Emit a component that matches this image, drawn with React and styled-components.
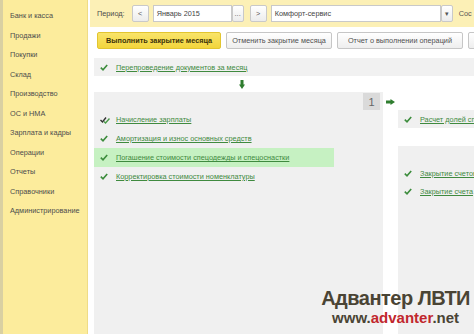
import React from "react";
import styled, { createGlobalStyle } from "styled-components";

const Global = createGlobalStyle`
  html, body { margin: 0; padding: 0; background: #fff; }
  body { font-family: "Liberation Sans", Arial, sans-serif; font-size: 7.3px; color: #4a4a4a; }
`;

const Page = styled.div`
  position: relative;
  display: flex;
  width: 474px;
  height: 334px;
  overflow: hidden;
  background: #fff;
`;

const Sidebar = styled.div`
  width: 84px;
  flex: none;
  background: #fcec9c;
  border-left: 3px solid #d9d0a2;
  border-right: 1px solid #efdc86;
  padding-top: 6px;
  display: flex;
  flex-direction: column;
`;

const NavItem = styled.div`
  height: 19.5px;
  line-height: 19.5px;
  padding-left: 7px;
  white-space: nowrap;
  color: #4d4d4d;
`;

const Main = styled.div`
  flex: 1;
  min-width: 0;
  padding-left: 6px;
  display: flex;
  flex-direction: column;
`;

const TopBar = styled.div`
  height: 27px;
  margin-left: -4px;
  padding-left: 7px;
  background: #fcf0b6;
  display: flex;
  align-items: center;
  white-space: nowrap;
`;

const Label = styled.span`
  margin-right: 7px;
`;

const SmallBtn = styled.div`
  width: ${(p) => p.w || 17}px;
  height: 17px;
  flex: none;
  box-sizing: border-box;
  border: 1px solid #c9c9c9;
  border-radius: 2px;
  background: linear-gradient(#ffffff, #ececec);
  display: flex;
  align-items: center;
  justify-content: center;
  color: #555;
  margin-left: ${(p) => p.ml || 0}px;
`;

const Field = styled.div`
  width: ${(p) => p.w}px;
  height: 17px;
  flex: none;
  box-sizing: border-box;
  border: 1px solid #c9c9c9;
  background: #fff;
  padding-left: 3px;
  display: flex;
  align-items: center;
  margin-left: ${(p) => p.ml || 0}px;
  color: #444;
`;

const After = styled.span`
  margin-left: 6px;
  color: #555;
`;

const ButtonRow = styled.div`
  display: flex;
  gap: 5px;
  margin-top: 5px;
  height: 17px;
  padding-left: 3px;
  white-space: nowrap;
`;

const Button = styled.div`
  height: 17px;
  box-sizing: border-box;
  padding: 0 ${(p) => p.px || 5}px;
  border: 1px solid ${(p) => (p.primary ? "#e2c530" : "#c6c6c6")};
  border-radius: 2px;
  background: ${(p) => (p.primary ? "linear-gradient(#f9e46a, #f2d53c)" : "linear-gradient(#ffffff, #eeeeee)")};
  font-weight: ${(p) => (p.primary ? "bold" : "normal")};
  color: ${(p) => (p.primary ? "#3b3208" : "#505050")};
  display: flex;
  align-items: center;
  flex: none;
`;

const Strip = styled.div`
  margin-top: 9px;
  height: 18px;
  background: #f1f1f1;
  display: flex;
  align-items: center;
  padding-left: 6px;
`;

const ArrowRow = styled.div`
  height: 16px;
  display: flex;
  align-items: center;
  padding-left: 145px;
`;

const Panels = styled.div`
  flex: 1;
  display: flex;
  min-width: 0;
`;

const LeftPanel = styled.div`
  width: 289px;
  flex: none;
  background: #f0f0f0;
  display: flex;
  flex-direction: column;
`;

const Badge = styled.div`
  align-self: flex-end;
  margin: 1px 3px 0 0;
  width: 17px;
  height: 17px;
  background: #dadada;
  color: #666;
  font-size: 11px;
  display: flex;
  align-items: center;
  justify-content: center;
`;

const Gap = styled.div`
  width: 15px;
  flex: none;
  display: flex;
  justify-content: center;
  padding-top: 7px;
  box-sizing: border-box;
`;

const RightCol = styled.div`
  flex: 1;
  min-width: 0;
  overflow: hidden;
  display: flex;
  flex-direction: column;
  padding-top: 18px;
`;

const Box = styled.div`
  background: #f0f0f0;
  padding-top: ${(p) => p.pt || 0}px;
  flex: ${(p) => (p.grow ? 1 : "none")};
  margin-top: ${(p) => p.mt || 0}px;
`;

const Row = styled.div`
  height: ${(p) => p.h || 19}px;
  display: flex;
  align-items: center;
  padding-left: 6px;
  width: ${(p) => (p.hl ? "234px" : "auto")};
  background: ${(p) => (p.hl ? "#c6f1c2" : "transparent")};
  white-space: nowrap;
`;

const IconBox = styled.span`
  width: 10px;
  margin-right: 6px;
  display: flex;
  align-items: center;
  flex: none;
`;

const Link = styled.span`
  color: #3f8a3f;
  text-decoration: underline;
  text-underline-offset: 1px;
`;

const Watermark = styled.div`
  position: absolute;
  right: 4px;
  bottom: 9px;
  display: flex;
  flex-direction: column;
  align-items: center;
  white-space: nowrap;
  font-family: "Liberation Sans", Arial, sans-serif;
  font-weight: bold;
  color: #4a4434;
  line-height: 1;
`;

const WmTitle = styled.div`
  font-size: 20px;
  letter-spacing: -0.5px;
`;

const WmUrl = styled.div`
  font-size: 15px;
  margin-top: 2px;
  span { color: #c1272d; }
`;

const Check = () => (
  <svg width="8" height="7" viewBox="0 0 8 7">
    <path d="M0.8 3.6 L3 5.8 L7.2 1" fill="none" stroke="#3c8c3c" strokeWidth="1.6" />
  </svg>
);

const DoubleCheck = () => (
  <svg width="10" height="8" viewBox="0 0 10 8">
    <path d="M0.5 4 L2.5 6 L6 1.5" fill="none" stroke="#333" strokeWidth="1.4" />
    <path d="M4 5.5 L5.5 7 L9.5 2.5" fill="none" stroke="#4a9a4a" strokeWidth="1.4" />
  </svg>
);

const DownArrow = () => (
  <svg width="6" height="9" viewBox="0 0 6 9">
    <path d="M1.5 0 H4.5 V4.5 H6 L3 9 L0 4.5 H1.5 Z" fill="#2f7d2f" />
  </svg>
);

const RightArrow = () => (
  <svg width="9" height="6" viewBox="0 0 9 6">
    <path d="M0 1.5 H4.5 V0 L9 3 L4.5 6 V4.5 H0 Z" fill="#2f7d2f" />
  </svg>
);

const nav = [
  "Банк и касса",
  "Продажи",
  "Покупки",
  "Склад",
  "Производство",
  "ОС и НМА",
  "Зарплата и кадры",
  "Операции",
  "Отчеты",
  "Справочники",
  "Администрирование",
];

export default function App() {
  return (
    <Page>
      <Global />
      <Sidebar>
        {nav.map((n) => (
          <NavItem key={n}>{n}</NavItem>
        ))}
      </Sidebar>
      <Main>
        <TopBar>
          <Label>Период:</Label>
          <SmallBtn>&lt;</SmallBtn>
          <Field w={79} ml={4}>Январь 2015</Field>
          <SmallBtn w={12}>...</SmallBtn>
          <SmallBtn ml={6}>&gt;</SmallBtn>
          <Field w={170} ml={4}>Комфорт-сервис</Field>
          <SmallBtn w={12}>▾</SmallBtn>
          <After>Сос</After>
        </TopBar>
        <ButtonRow>
          <Button primary px={8}>Выполнить закрытие месяца</Button>
          <Button px={5}>Отменить закрытие месяца</Button>
          <Button px={10}>Отчет о выполнении операций</Button>
          <Button px={8}>Справка</Button>
        </ButtonRow>
        <Strip>
          <IconBox><Check /></IconBox>
          <Link>Перепроведение документов за месяц</Link>
        </Strip>
        <ArrowRow>
          <DownArrow />
        </ArrowRow>
        <Panels>
          <LeftPanel>
            <Badge>1</Badge>
            <Row>
              <IconBox><DoubleCheck /></IconBox>
              <Link>Начисление зарплаты</Link>
            </Row>
            <Row>
              <IconBox><Check /></IconBox>
              <Link>Амортизация и износ основных средств</Link>
            </Row>
            <Row hl>
              <IconBox><Check /></IconBox>
              <Link>Погашение стоимости спецодежды и спецоснастки</Link>
            </Row>
            <Row>
              <IconBox><Check /></IconBox>
              <Link>Корректировка стоимости номенклатуры</Link>
            </Row>
          </LeftPanel>
          <Gap>
            <RightArrow />
          </Gap>
          <RightCol>
            <Box>
              <Row h={18}>
                <IconBox><Check /></IconBox>
                <Link>Расчет долей сп</Link>
              </Row>
            </Box>
            <Box grow mt={18} pt={18}>
              <Row h={18}>
                <IconBox><Check /></IconBox>
                <Link>Закрытие счетов</Link>
              </Row>
              <Row h={18}>
                <IconBox><Check /></IconBox>
                <Link>Закрытие счета</Link>
              </Row>
            </Box>
          </RightCol>
        </Panels>
      </Main>
      <Watermark>
        <WmTitle>Адвантер ЛВТИ</WmTitle>
        <WmUrl>www.<span>advanter</span>.net</WmUrl>
      </Watermark>
    </Page>
  );
}
